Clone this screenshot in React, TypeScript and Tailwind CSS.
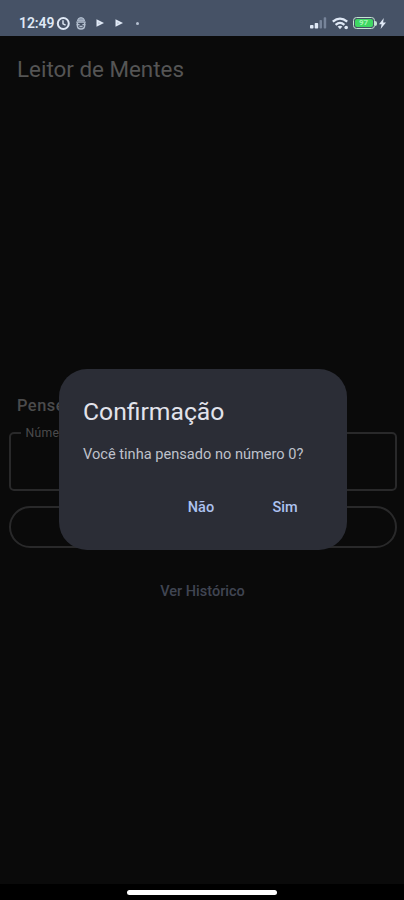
const StatusBar = () => (
  <header className="h-[35.5px] shrink-0 bg-[#465266] flex items-start justify-between pt-[15px] pl-[19px] pr-[18px] text-[#dfe8f5]">
    <div className="flex items-center h-4">
      <span className="w-[36px] text-[14px] leading-4 font-semibold whitespace-nowrap tracking-[-0.1px]">12:49</span>
      <svg width="15" height="15" viewBox="0 0 15 15" fill="none" stroke="currentColor" className="ml-px">
        <circle cx="7.3" cy="7.5" r="5.5" strokeWidth="2" />
        <path d="M7 4.2v3.6l2.6 1.4" strokeWidth="1.4" />
      </svg>
      <svg width="10" height="13" viewBox="0 0 10 13" fill="none" stroke="#b4c0d0" className="ml-[5px]">
        <path d="M1.5 4Q1.5 .6 5 .6T8.5 4z" fill="#8f9cb0" strokeWidth="1" />
        <path d="M.3 5.2h9.4M.6 7.6h3M6.4 7.6h3" strokeWidth="1.3" />
        <path d="M1.4 5.5v3Q1.4 12 5 12t3.6-3.5v-3M3.4 9.6h3.2" strokeWidth="1.5" />
      </svg>
      <svg width="8" height="8" viewBox="0 0 8 8" fill="currentColor" className="ml-[10px]">
        <path d="M.5.2 8 4 .5 7.8z" />
        <path d="M2.5 3.4 4 4l-1.5.7z" fill="#7d899c" />
      </svg>
      <svg width="8" height="8" viewBox="0 0 8 8" fill="currentColor" className="ml-[11px]">
        <path d="M.5.2 8 4 .5 7.8z" />
        <path d="M2.5 3.4 4 4l-1.5.7z" fill="#7d899c" />
      </svg>
      <span className="ml-[13px] size-[3px] rounded-full bg-[#b5c0d0]" />
    </div>

    <div className="flex items-center h-4">
      <svg width="18" height="12" viewBox="0 0 18 12" fill="currentColor">
        <rect x="0" y="8" width="3.5" height="3.5" rx=".8" />
        <rect x="4.7" y="6" width="3.5" height="5.5" rx=".8" />
        <rect x="9.5" y="3" width="2.5" height="8.5" rx=".8" fill="#77849a" />
        <rect x="13.7" y=".3" width="2.5" height="11.2" rx=".8" fill="#77849a" />
      </svg>
      <svg width="17" height="13" viewBox="0 0 17 13" fill="none" stroke="currentColor" className="ml-[4.5px]">
        <path d="M.8 4.7Q8 -1.5 15.2 4.7M3.6 7.8Q8 4 12.4 7.8" strokeWidth="2.3" />
        <path d="M5.6 9.6Q8 7.8 10.4 9.6L8 12.2z" fill="currentColor" stroke="none" />
        <circle cx="14.2" cy="10.5" r="1.8" fill="currentColor" stroke="none" />
      </svg>
      <div className="ml-[3.5px] w-[22px] h-[12.5px] rounded-[3.5px] border border-[#c4e5d3] p-px">
        <div className="h-full rounded-[2px] bg-[#3fd763] flex items-center justify-center text-[8px] font-bold text-[#a5f5b6]">
          97
        </div>
      </div>
      <span className="w-[2px] h-[5px] rounded-r-sm bg-[#c4e5d3]" />
      <svg width="7" height="11" viewBox="0 0 7 11" fill="currentColor" className="ml-[2.5px]">
        <path d="M4.8 0 0 6.2h2.6L1.6 11 7 4.5H4.1z" />
      </svg>
    </div>
  </header>
);

const ConfirmDialog = () => (
  <div
    role="dialog"
    className="absolute left-[59px] top-[369px] w-[288px] h-[180.5px] rounded-[28px] bg-[#2b2d36] pl-[24px] pr-[20px]"
  >
    <h2 className="mt-[27px] text-[24.7px] leading-8 text-[#e2e3eb] whitespace-nowrap">Confirmação</h2>
    <p className="mt-[16px] text-[14.6px] leading-5 text-[#bfc1cb] whitespace-nowrap">
      Você tinha pensado no número 0?
    </p>
    <div className="mt-[24px] flex justify-end text-[14.5px] font-medium leading-5 text-[#adc2f0]">
      <button className="w-[84px] h-10">Não</button>
      <button className="w-[84px] h-10">Sim</button>
    </div>
  </div>
);

const App = () => {
  return (
    <div className="relative w-full h-[900px] overflow-hidden flex flex-col bg-[#0a0a0a] font-[Roboto,sans-serif]">
      <StatusBar />

      <h1 className="mt-[17px] ml-[17px] text-[22.4px] leading-8 text-[#555555]">Leitor de Mentes</h1>

      <main className="flex-1 mt-[309px] pl-[8.5px] pr-[7.5px]">
        <p className="ml-[8.5px] text-[16.4px] leading-6 font-medium tracking-[0.5px] text-[#4b4b4c]">Pense</p>
        <fieldset className="mt-[7px] h-[66px] border-2 border-[#29292a] rounded-[5px] pl-[10px]">
          <legend className="px-[5px] text-[12.2px] leading-4 tracking-[0.3px] text-[#4b4b4c]">Número</legend>
        </fieldset>
        <button className="block mt-[15px] w-full h-[42.5px] rounded-full border-2 border-[#29292a]" />
        <button className="block mt-[33.5px] w-full text-[14.5px] leading-5 font-medium text-[#404552]">
          Ver Histórico
        </button>
      </main>

      <footer className="h-[16px] shrink-0 bg-black flex justify-center pt-[5.5px]">
        <span className="w-[150px] h-[5px] rounded-full bg-white" />
      </footer>

      <ConfirmDialog />
    </div>
  );
};

export default App;
